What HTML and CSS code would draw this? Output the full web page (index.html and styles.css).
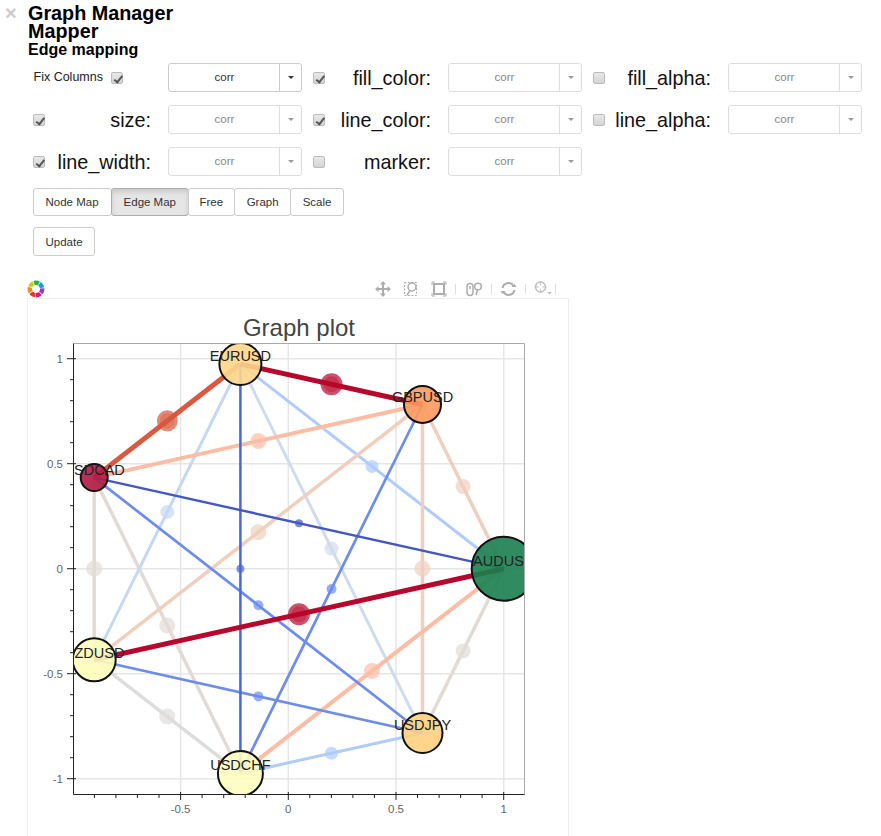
FILE: index.html
```html
<!DOCTYPE html>
<html lang="en">
<head>
<meta charset="utf-8">
<title>Graph Manager</title>
<link rel="stylesheet" href="styles.css">
</head>
<body>
<div class="page">
  <div class="close">×</div>
  <h1 class="title">Graph Manager</h1>
  <h1 class="title">Mapper</h1>
  <h2 class="subtitle">Edge mapping</h2>

  <div class="controls">
    <div class="cell">
      <span class="fix-label">Fix Columns</span><input class="check fix-check" type="checkbox" checked disabled>
      <div class="dropdown active"><span class="dd-main">corr</span><span class="dd-caret"><i></i></span></div>
    </div>
    <div class="cell">
      <input class="check" type="checkbox" checked disabled><label class="map-label">fill_color:</label>
      <div class="dropdown"><span class="dd-main">corr</span><span class="dd-caret"><i></i></span></div>
    </div>
    <div class="cell">
      <input class="check" type="checkbox" disabled><label class="map-label">fill_alpha:</label>
      <div class="dropdown"><span class="dd-main">corr</span><span class="dd-caret"><i></i></span></div>
    </div>
    <div class="cell">
      <input class="check" type="checkbox" checked disabled><label class="map-label">size:</label>
      <div class="dropdown"><span class="dd-main">corr</span><span class="dd-caret"><i></i></span></div>
    </div>
    <div class="cell">
      <input class="check" type="checkbox" checked disabled><label class="map-label">line_color:</label>
      <div class="dropdown"><span class="dd-main">corr</span><span class="dd-caret"><i></i></span></div>
    </div>
    <div class="cell">
      <input class="check" type="checkbox" disabled><label class="map-label">line_alpha:</label>
      <div class="dropdown"><span class="dd-main">corr</span><span class="dd-caret"><i></i></span></div>
    </div>
    <div class="cell">
      <input class="check" type="checkbox" checked disabled><label class="map-label">line_width:</label>
      <div class="dropdown"><span class="dd-main">corr</span><span class="dd-caret"><i></i></span></div>
    </div>
    <div class="cell">
      <input class="check" type="checkbox" disabled><label class="map-label">marker:</label>
      <div class="dropdown"><span class="dd-main">corr</span><span class="dd-caret"><i></i></span></div>
    </div>
  </div>

  <div class="tabs">
    <button class="btn tab-wide">Node Map</button><button class="btn pressed">Edge Map</button><button class="btn tab-narrow">Free</button><button class="btn">Graph</button><button class="btn">Scale</button>
  </div>
  <button class="btn update">Update</button>

  <div class="toolbar">
    <svg class="logo" width="18" height="18" viewBox="0 0 18 18">
      <g fill="none" stroke-width="4.400">
        <circle cx="9" cy="9" r="6.200" stroke="#29b34a" stroke-dasharray="6 33" stroke-dashoffset="3" transform="rotate(-90 9 9)"/>
        <circle cx="9" cy="9" r="6.200" stroke="#1e9ad6" stroke-dasharray="6 33" stroke-dashoffset="3" transform="rotate(-39 9 9)"/>
        <circle cx="9" cy="9" r="6.200" stroke="#8a45b5" stroke-dasharray="6 33" stroke-dashoffset="3" transform="rotate(12 9 9)"/>
        <circle cx="9" cy="9" r="6.200" stroke="#e6127d" stroke-dasharray="6 33" stroke-dashoffset="3" transform="rotate(64 9 9)"/>
        <circle cx="9" cy="9" r="6.200" stroke="#e9332c" stroke-dasharray="6 33" stroke-dashoffset="3" transform="rotate(115 9 9)"/>
        <circle cx="9" cy="9" r="6.200" stroke="#f58a1f" stroke-dasharray="6 33" stroke-dashoffset="3" transform="rotate(167 9 9)"/>
        <circle cx="9" cy="9" r="6.200" stroke="#c6cf2a" stroke-dasharray="6 33" stroke-dashoffset="3" transform="rotate(218 9 9)"/>
      </g>
    </svg>
    <div class="tools">
      <svg class="tool" width="16" height="16" viewBox="0 0 16 16">
        <path class="tool-thick" d="M8 2V14M2 8H14"/>
        <path class="tool-fill" d="M8 0L11 3.500H5ZM8 16L5 12.500H11ZM0 8L3.500 5V11ZM16 8L12.500 11V5Z"/>
      </svg>
      <svg class="tool" width="16" height="16" viewBox="0 0 16 16">
        <rect class="tool-dash" x="1.500" y="1.500" width="12" height="13"/>
        <circle class="tool-line" cx="9" cy="6" r="4"/>
        <path class="tool-line" d="M7 9.500L4 14"/>
      </svg>
      <svg class="tool" width="16" height="16" viewBox="0 0 16 16">
        <rect class="tool-thick" x="3" y="3" width="10" height="10"/>
        <path class="tool-thin" d="M1 4V1H4M12 1H15V4M15 12V15H12M4 15H1V12"/>
      </svg>
      <span class="sep"></span>
      <svg class="tool wheel" width="16" height="16" viewBox="0 0 16 16">
        <rect class="tool-line" x="1" y="2.500" width="6" height="12" rx="3"/>
        <path class="tool-line" d="M4 5V8"/>
        <circle class="tool-line" cx="12" cy="5.500" r="3.300"/>
        <path class="tool-line" d="M11.500 9L10 14"/>
      </svg>
      <span class="sep wheel-sep"></span>
      <svg class="tool reset" width="17" height="16" viewBox="0 0 17 16">
        <path class="tool-thick" d="M2.500 7A6 6 0 0 1 13.500 5M14.500 9A6 6 0 0 1 3.500 11"/>
        <path class="tool-fill" d="M11.500 6H16.500L14.500 3ZM5.500 10H.5L2.500 13Z"/>
      </svg>
      <span class="sep reset-sep"></span>
      <svg class="tool hover" width="18" height="16" viewBox="0 0 18 16">
        <circle class="tool-line" cx="6.500" cy="6" r="5"/>
        <path class="tool-thin" d="M6.500 0V4M6.500 8V12M.5 6H4.500M8.500 6H12.500"/>
        <path class="tool-fill" d="M13 11H18L15.500 13.500Z"/>
      </svg>
      <span class="sep last"></span>
    </div>
  </div>

  <div class="figure">
    <svg class="plot" width="541" height="540" viewBox="28 298 541 540">
      <defs>
        <clipPath id="frame"><rect x="73.500" y="343.500" width="451" height="451"/></clipPath>
      </defs>
      <text class="plot-title" x="299" y="336">Graph plot</text>

      <path class="grid" d="M180.600 344V794M288.300 344V794M396 344V794M503.700 344V794M74 358.700H524M74 463.700H524M74 568.700H524M74 673.700H524M74 778.700H524"/>

      <g clip-path="url(#frame)">
        <g class="edge beige"><line x1="94.200" y1="477.600" x2="94.200" y2="659.800"/><circle cx="94.200" cy="568.700" r="8"/></g>
        <g class="edge beige"><line x1="94.200" y1="477.600" x2="240.400" y2="773.400"/><circle cx="167.300" cy="625.500" r="8"/></g>
        <g class="edge grey"><line x1="94.200" y1="659.800" x2="240.400" y2="773.400"/><circle cx="167.300" cy="716.600" r="8"/></g>
        <g class="edge beige"><line x1="503.700" y1="568.700" x2="422.500" y2="733"/><circle cx="463.100" cy="650.900" r="7.500"/></g>
        <g class="edge pale"><line x1="240.400" y1="364" x2="422.500" y2="733"/><circle cx="331.500" cy="548.500" r="7"/></g>
        <g class="edge sky-pale"><line x1="240.400" y1="364" x2="94.200" y2="659.800"/><circle cx="167.300" cy="511.900" r="7"/></g>
        <g class="edge sky"><line x1="240.400" y1="364" x2="503.700" y2="568.700"/><circle cx="372" cy="466.400" r="6.500"/></g>
        <g class="edge sky"><line x1="240.400" y1="773.400" x2="422.500" y2="733"/><circle cx="331.500" cy="753.200" r="6.500"/></g>
        <g class="edge peach"><line x1="422.500" y1="404.500" x2="503.700" y2="568.700"/><circle cx="463.100" cy="486.600" r="7.500"/></g>
        <g class="edge peach"><line x1="422.500" y1="404.500" x2="94.200" y2="659.800"/><circle cx="258.400" cy="532.200" r="8"/></g>
        <g class="edge peach"><line x1="422.500" y1="404.500" x2="422.500" y2="733"/><circle cx="422.500" cy="568.700" r="8"/></g>
        <g class="edge salmon"><line x1="422.500" y1="404.500" x2="94.200" y2="477.600"/><circle cx="258.400" cy="441" r="8"/></g>
        <g class="edge salmon"><line x1="503.700" y1="568.700" x2="240.400" y2="773.400"/><circle cx="372" cy="671" r="8"/></g>
        <g class="edge blue"><line x1="422.500" y1="404.500" x2="240.400" y2="773.400"/><circle cx="331.500" cy="589" r="5"/></g>
        <g class="edge blue"><line x1="94.200" y1="477.600" x2="422.500" y2="733"/><circle cx="258.400" cy="605.300" r="5"/></g>
        <g class="edge blue"><line x1="94.200" y1="659.800" x2="422.500" y2="733"/><circle cx="258.400" cy="696.400" r="5"/></g>
        <g class="edge navy"><line x1="240.400" y1="364" x2="240.400" y2="773.400"/><circle cx="240.400" cy="568.700" r="4"/></g>
        <g class="edge navy thin-edge"><line x1="94.200" y1="477.600" x2="503.700" y2="568.700"/><circle cx="299" cy="523.200" r="4"/></g>
        <g class="edge coral"><line x1="240.400" y1="364" x2="94.200" y2="477.600"/><circle cx="167.300" cy="420.800" r="10.500"/><circle class="core" cx="167.300" cy="420.800" r="7.500"/></g>
        <g class="edge crimson"><line x1="240.400" y1="364" x2="422.500" y2="404.500"/><circle cx="331.500" cy="384.300" r="11"/><circle class="core" cx="331.500" cy="384.300" r="8"/></g>
        <g class="edge crimson"><line x1="503.700" y1="568.700" x2="94.200" y2="659.800"/><circle cx="299" cy="614.300" r="11"/><circle class="core" cx="299" cy="614.300" r="8"/></g>

        <circle class="node n-aud" cx="503.700" cy="568.700" r="32"/>
        <circle class="node n-eur" cx="240.400" cy="364" r="21"/>
        <circle class="node n-gbp" cx="422.500" cy="404.500" r="18.500"/>
        <circle class="node n-cad" cx="94.200" cy="477.600" r="13.500"/>
        <circle class="node n-nzd" cx="94.200" cy="659.800" r="21.500"/>
        <circle class="node n-chf" cx="240.400" cy="773.400" r="22.500"/>
        <circle class="node n-jpy" cx="422.500" cy="733" r="20"/>

        <text class="node-label" x="503.700" y="566">AUDUSD</text>
        <text class="node-label" x="240.400" y="361">EURUSD</text>
        <text class="node-label" x="422.500" y="402">GBPUSD</text>
        <text class="node-label" x="94.200" y="475">USDCAD</text>
        <text class="node-label" x="94.200" y="658">NZDUSD</text>
        <text class="node-label" x="240.400" y="770">USDCHF</text>
        <text class="node-label" x="422.500" y="730">USDJPY</text>
      </g>

      <path class="frame-line" d="M73.500 343.500H524.500V794.500"/>
      <path class="axis" d="M73.500 343.500V794.500H524.500"/>
      <path class="axis" d="M67 358.700H76M67 463.700H76M67 568.700H76M67 673.700H76M67 778.700H76M70 379.700H73.500M70 400.700H73.500M70 421.700H73.500M70 442.700H73.500M70 484.700H73.500M70 505.700H73.500M70 526.700H73.500M70 547.700H73.500M70 589.700H73.500M70 610.700H73.500M70 631.700H73.500M70 652.700H73.500M70 694.700H73.500M70 715.700H73.500M70 736.700H73.500M70 757.700H73.500"/>
      <path class="axis" d="M180.600 792V800M288.300 792V800M396 792V800M503.700 792V800M94.400 794V798M115.900 794V798M137.400 794V798M159 794V798M202.100 794V798M223.700 794V798M245.200 794V798M266.700 794V798M309.800 794V798M331.400 794V798M352.900 794V798M374.400 794V798M417.500 794V798M439.100 794V798M460.600 794V798M482.100 794V798"/>

      <text class="tick-y" x="63" y="363">1</text>
      <text class="tick-y" x="63" y="468">0.5</text>
      <text class="tick-y" x="63" y="573">0</text>
      <text class="tick-y" x="63" y="678">-0.5</text>
      <text class="tick-y" x="63" y="783">-1</text>
      <text class="tick-x" x="180.600" y="813">-0.5</text>
      <text class="tick-x" x="288.300" y="813">0</text>
      <text class="tick-x" x="396" y="813">0.5</text>
      <text class="tick-x" x="503.700" y="813">1</text>
    </svg>
  </div>
</div>
</body>
</html>
```

FILE: styles.css
```css
html, body {
  margin: 0;
  padding: 0;
  background: #fff;
  overflow: hidden;
}

body {
  font-family: "Liberation Sans", Arial, sans-serif;
  color: #000;
}

.page {
  position: relative;
  height: 836px;
  overflow: hidden;
  padding: 4px 0 0 28px;
  box-sizing: border-box;
}

.close {
  position: absolute;
  left: 5px;
  top: 3px;
  font-size: 20px;
  font-weight: bold;
  line-height: 20px;
  color: #ccc;
}

.title {
  margin: 0;
  font-size: 19.800px;
  line-height: 18px;
  font-weight: bold;
}

.subtitle {
  margin: 0;
  font-size: 16px;
  line-height: 20px;
  font-weight: bold;
}

.controls {
  display: grid;
  grid-template-columns: repeat(3, 280px);
  grid-auto-rows: 42px;
  margin: 3px 0 0 5px;
}

.cell {
  display: flex;
  align-items: flex-start;
}

.check {
  appearance: none;
  -webkit-appearance: none;
  position: relative;
  flex: none;
  width: 12px;
  height: 12px;
  margin: 9px 0 0;
  border: 1px solid #bbb;
  border-radius: 2px;
  background: linear-gradient(#e8e8e8, #d4d4d4);
  box-sizing: border-box;
}

.check:checked::after {
  content: "";
  position: absolute;
  left: 3.500px;
  top: 0.5px;
  width: 3px;
  height: 6.500px;
  border: solid #555;
  border-width: 0 2px 2px 0;
  transform: rotate(38deg);
}

.fix-label {
  flex: none;
  width: 77.500px;
  margin-top: 7px;
  padding-left: 0.5px;
  font-size: 12.500px;
  line-height: 15px;
  color: #222;
}

.map-label {
  flex: none;
  width: 106px;
  margin-top: 3px;
  font-size: 19.800px;
  line-height: 25px;
  text-align: right;
  color: #111;
}

.dropdown {
  display: flex;
  flex: none;
  width: 134px;
  height: 29px;
  margin-left: 17px;
  box-sizing: border-box;
  border: 1px solid #ddd;
  border-radius: 3px;
  font-size: 11.500px;
  color: #888;
  background: #fff;
}

.fix-check + .dropdown {
  margin-left: 45px;
}

.dd-main {
  flex: 1;
  padding-left: 1px;
  text-align: center;
  line-height: 27px;
}

.dd-caret {
  display: flex;
  flex: none;
  width: 21px;
  align-items: center;
  justify-content: center;
  border-left: 1px solid #ddd;
}

.dd-caret i {
  width: 0;
  height: 0;
  border-style: solid;
  border-width: 3px 3px 0;
  border-color: #999 transparent transparent;
}

.dropdown.active {
  border-color: #ccc;
  color: #333;
}

.dropdown.active .dd-caret {
  border-left-color: #ccc;
}

.dropdown.active .dd-caret i {
  border-top-color: #333;
}

.tabs {
  display: flex;
  margin: -1px 0 0 5px;
}

.btn {
  display: block;
  height: 28px;
  padding: 0 11.500px;
  border: 1px solid #ccc;
  border-radius: 3px;
  background: #fff;
  color: #333;
  font-family: inherit;
  font-size: 11.500px;
  line-height: 26px;
}

.tabs .btn {
  margin-right: -1px;
}

.tabs .btn.tab-wide {
  padding-right: 12.500px;
}

.tabs .btn.tab-narrow {
  padding: 0 11px;
}

.btn.pressed {
  background: #e6e6e6;
  border-color: #adadad;
  box-shadow: inset 0 3px 5px rgba(0, 0, 0, 0.125);
}

.update {
  height: 29px;
  margin: 11px 0 0 5px;
}

.toolbar {
  display: flex;
  justify-content: space-between;
  align-items: center;
  width: 541px;
  height: 18px;
  margin: 24px 0 0 -1px;
}

.tools {
  display: flex;
  align-items: center;
  margin-right: 12px;
}

.tool { margin-left: 12px; }
.tool.wheel { margin-left: 10px; }
.tool.reset { margin-left: 8px; }
.tool.hover { margin-left: 8px; opacity: 0.75; }

.sep {
  width: 1px;
  height: 10px;
  margin-left: 8px;
  background: #ddd;
}

.sep.wheel-sep { margin-left: 9px; }
.sep.reset-sep { margin-left: 8px; }
.sep.last { margin-left: 3px; }

.tool-line,
.tool-thin,
.tool-thick,
.tool-dash {
  fill: none;
  stroke: #adadad;
}

.tool-line { stroke-width: 1.500; }
.tool-thin { stroke-width: 1; }
.tool-thick { stroke-width: 2; }
.tool-dash { stroke-width: 1; stroke-dasharray: 2 1.500; }
.tool-fill { fill: #adadad; }

.figure {
  width: 542px;
  margin-left: -1px;
  border: 1px solid #eee;
  box-sizing: border-box;
  height: 600px;
}

.plot {
  display: block;
  margin-top: -1px;
}

.plot-title {
  font-size: 24px;
  fill: #444;
  text-anchor: middle;
}

.grid {
  fill: none;
  stroke: #e6e6e6;
  stroke-width: 1.500;
}

.frame-line {
  fill: none;
  stroke: #aaa;
  stroke-width: 1;
}

.axis {
  fill: none;
  stroke: #222;
  stroke-width: 1;
}

.tick-y,
.tick-x {
  font-size: 11.500px;
  fill: #666;
}

.tick-y { text-anchor: end; }
.tick-x { text-anchor: middle; }

.edge line {
  stroke: currentColor;
  stroke-width: 3.500;
}

.edge circle {
  fill: currentColor;
  fill-opacity: 0.7;
}

.edge circle.core {
  fill-opacity: 0.35;
}

.crimson { color: #b8072c; }
.crimson line { stroke-width: 5; }
.coral { color: #d8593f; }
.coral line { stroke-width: 5; }
.salmon { color: #fdbda5; }
.salmon line { stroke-width: 4; }
.peach { color: #f0cfbe; }
.beige { color: #e2dbd5; }
.grey { color: #dedddc; }
.sky { color: #afccfd; }
.sky line { stroke-width: 3; }
.sky-pale { color: #c4d8f5; }
.sky-pale line { stroke-width: 3; }
.pale { color: #cfdcec; }
.pale line { stroke-width: 3; }
.blue { color: #6c8dee; }
.blue line { stroke-width: 2.700; }
.navy { color: #4a67d6; }
.navy line { stroke-width: 2.500; }
.navy.thin-edge { color: #4357c6; }
.navy.thin-edge line { stroke-width: 2.400; }

.node {
  stroke: #111;
  stroke-width: 2;
  fill-opacity: 0.9;
}

.n-aud { fill: #1a7f4f; }
.n-eur { fill: #fdd78c; }
.n-gbp { fill: #fd9a5e; }
.n-cad { fill: #b01a42; }
.n-nzd { fill: #fdfdbb; }
.n-chf { fill: #fdfdbf; }
.n-jpy { fill: #fed07e; }

.node-label {
  font-size: 14.500px;
  fill: #222;
  text-anchor: middle;
}
```
